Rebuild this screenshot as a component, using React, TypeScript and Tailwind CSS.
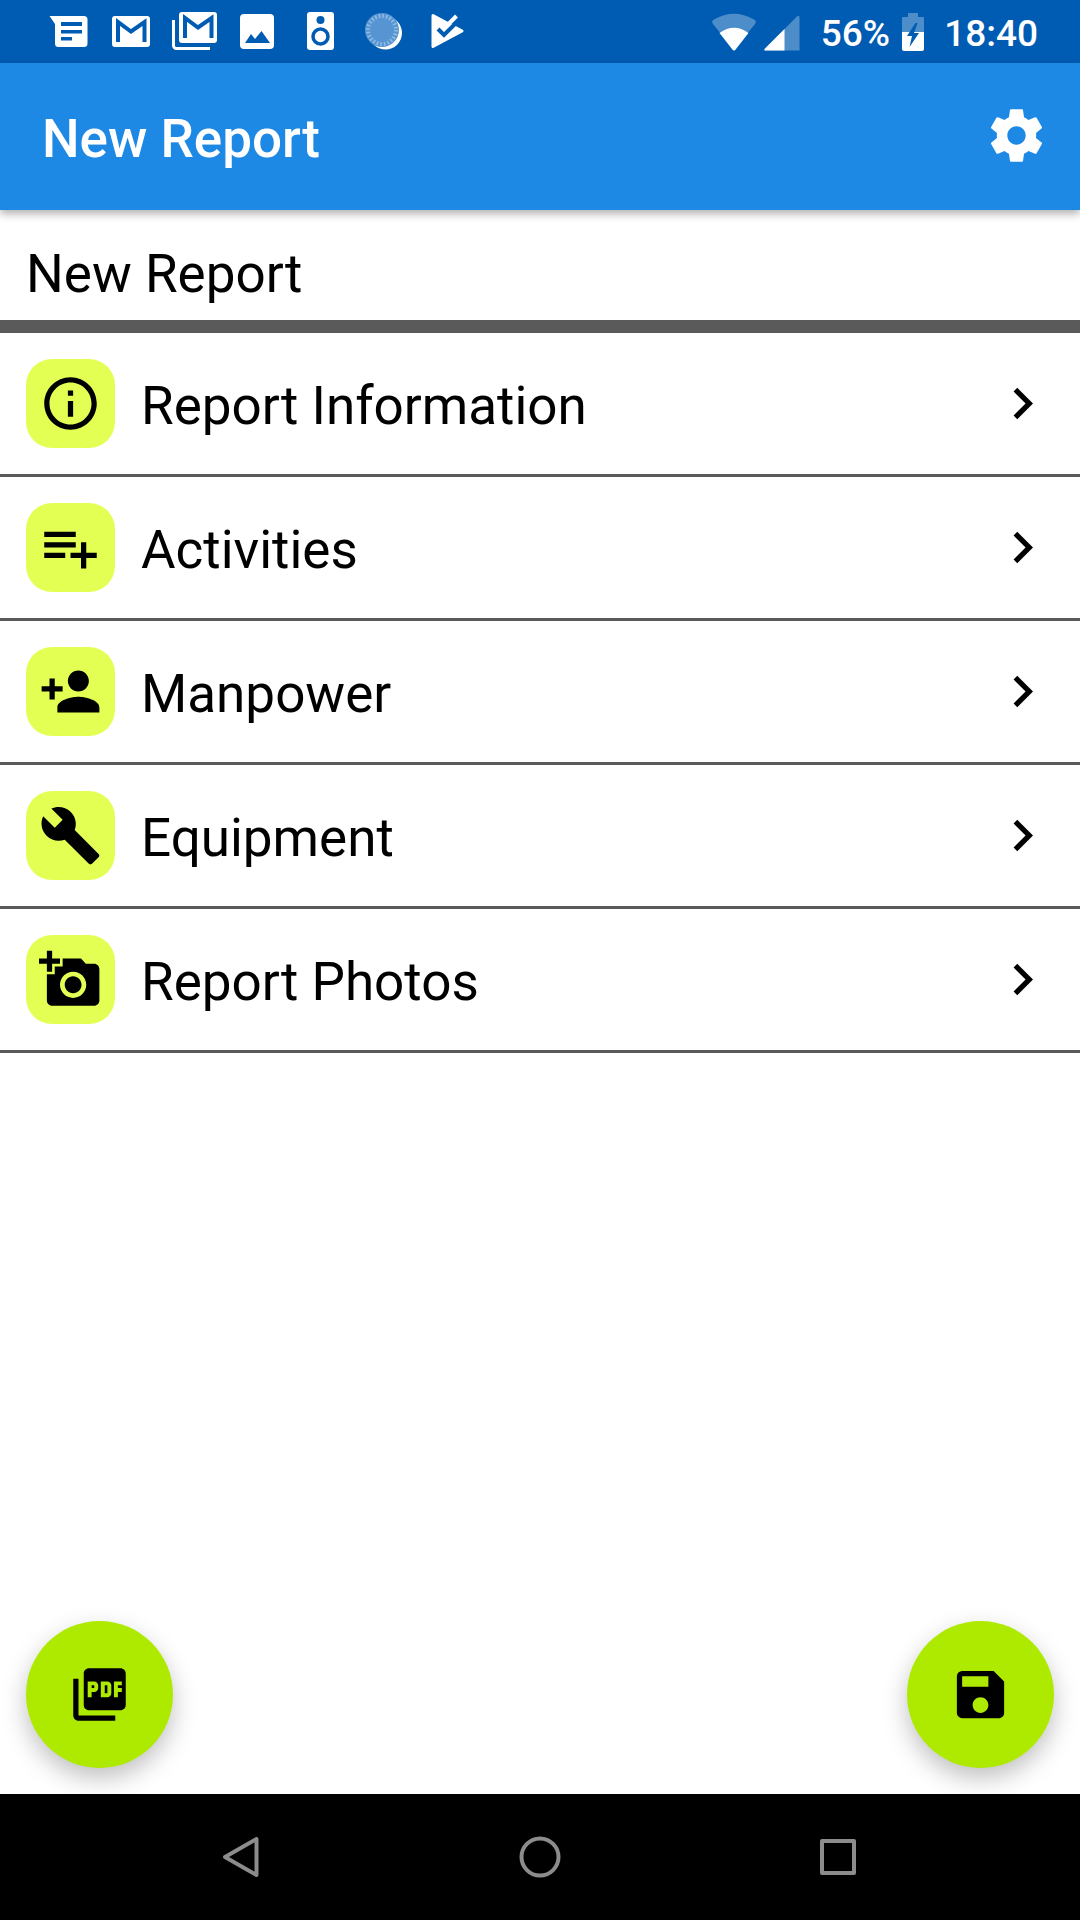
import React from 'react';
import {
  MdAddAPhoto,
  MdBuild,
  MdChevronRight,
  MdInfoOutline,
  MdPersonAdd,
  MdPictureAsPdf,
  MdSave,
} from 'react-icons/md';

const PlaylistAddIcon = ({ className }: { className?: string }) => (
  <svg className={className} viewBox="0 0 24 24" fill="currentColor">
    <path d="M14 10H2v2h12v-2zm0-4H2v2h12V6zm4 8v-4h-2v4h-4v2h4v4h2v-4h4v-2h-4zM2 16h8v-2H2v2z" />
  </svg>
);

const SettingsIcon = ({ className }: { className?: string }) => (
  <svg className={className} viewBox="0 0 24 24" fill="currentColor">
    <path d="M19.430 12.980c.040-.320.070-.640.070-.980s-.030-.660-.070-.980l2.110-1.650c.190-.150.240-.420.120-.640l-2-3.460c-.120-.220-.390-.300-.610-.220l-2.490 1c-.520-.400-1.080-.730-1.690-.980l-.380-2.650C14.460 2.180 14.250 2 14 2h-4c-.250 0-.460.180-.490.420l-.380 2.650c-.610.250-1.170.590-1.690.980l-2.490-1c-.230-.090-.490 0-.610.220l-2 3.460c-.130.220-.070.490.120.640l2.110 1.650c-.040.320-.070.650-.070.980s.030.660.070.980l-2.110 1.650c-.190.150-.240.420-.120.640l2 3.460c.120.220.390.300.610.220l2.490-1c.520.400 1.080.730 1.690.980l.380 2.650c.030.240.240.420.490.420h4c.250 0 .460-.180.490-.420l.380-2.650c.610-.250 1.170-.590 1.690-.980l2.490 1c.230.090.490 0 .610-.220l2-3.460c.120-.220.070-.490-.120-.640l-2.110-1.650zM12 15.500c-1.930 0-3.500-1.570-3.500-3.500s1.570-3.500 3.500-3.500 3.500 1.570 3.500 3.500-1.570 3.500-3.500 3.500z" />
  </svg>
);

const sections = [
  { title: 'Report Information', icon: MdInfoOutline },
  { title: 'Activities', icon: PlaylistAddIcon },
  { title: 'Manpower', icon: MdPersonAdd },
  { title: 'Equipment', icon: MdBuild },
  { title: 'Report Photos', icon: MdAddAPhoto },
];

const NotificationIcons = () => (
  <div className="flex items-center gap-[18px]">
    {/* Messages */}
    <svg className="size-[45px]" viewBox="0 0 45 45" fill="#fff">
      <path d="M3.500 7H38a3.500 3.500 0 0 1 3.500 3.500V34.500A3.500 3.500 0 0 1 38 38H12.500A3.500 3.500 0 0 1 9 34.500V15z" />
      <path d="M15 13h21v4H15zM15 21h21v3.500H15zM15 28h11v3.500H15z" fill="#005cb2" />
    </svg>
    {/* Mail */}
    <svg className="size-[45px]" viewBox="0 0 45 45" fill="none">
      <rect x="3" y="7" width="38" height="31" rx="3" fill="#fff" />
      <path d="M9 33V13l13 9.500L35.500 13v20" stroke="#005cb2" strokeWidth="4" />
    </svg>
    {/* Stacked mail */}
    <svg className="size-[45px]" viewBox="0 0 45 45" fill="none">
      <rect x="7" y="3" width="38" height="31" rx="3" fill="#fff" />
      <path d="M13 29V9l13 9.500L39.500 9v20" stroke="#005cb2" strokeWidth="4" />
      <path d="M1.500 11v25.500a3 3 0 0 0 3 3H38" stroke="#fff" strokeWidth="3" />
    </svg>
    {/* Picture */}
    <svg className="size-[45px]" viewBox="0 0 45 45">
      <rect x="5" y="5" width="34" height="35" rx="4" fill="#fff" />
      <path d="M10 34l6-9 4 5 6.500-8L35 34z" fill="#005cb2" />
    </svg>
    {/* Speaker */}
    <svg className="size-[45px]" viewBox="0 0 45 45">
      <rect x="9" y="3" width="27" height="38" rx="3" fill="#fff" />
      <circle cx="22.500" cy="11" r="4" fill="#005cb2" />
      <circle cx="22.500" cy="27.500" r="7.500" fill="none" stroke="#005cb2" strokeWidth="3.500" />
    </svg>
    {/* Dial */}
    <svg className="size-[45px]" viewBox="0 0 45 45">
      <circle cx="24.500" cy="24" r="16.500" fill="#fff" />
      <circle cx="21" cy="21" r="17" fill="#5795d2" />
      <circle cx="21" cy="21" r="14" fill="none" stroke="#8fbae5" strokeWidth="4" strokeDasharray="1.600 2.060" />
    </svg>
    {/* Play check */}
    <svg className="size-[45px]" viewBox="0 0 45 45" fill="none">
      <path d="M9 6.500L38 22 9 37.500z" fill="#fff" stroke="#fff" strokeWidth="3" strokeLinejoin="round" />
      <path d="M14 20l6 6 20-20" stroke="#005cb2" strokeWidth="4" />
      <path d="M19 20.500L32.500 7" stroke="#fff" strokeWidth="4" />
    </svg>
  </div>
);

const StatusBar = () => (
  <div className="flex h-[63px] items-center justify-between bg-[#005cb2] pl-[46px] pr-[42px] text-white">
    <NotificationIcons />
    <div className="flex items-center text-[37px] leading-none font-medium">
      <svg className="h-[38px] w-[44px]" viewBox="0 0 44 38">
        <path d="M22 37L1 11Q-1 8 2 6.500Q22-5 42 6.500Q45 8 43 11z" fill="#4d8dc9" />
        <path d="M22 37.500q-1 0-2-1.500L7.500 20Q22 9.500 36.500 20L24 36q-1 1.500-2 1.500z" fill="#fff" />
      </svg>
      <svg className="ml-2 h-[38px] w-[36px]" viewBox="0 0 36 38">
        <path d="M1 37.500Q-.5 37 1 35.500L33 3.500q2.500-2 2.500 1v33z" fill="#4d8dc9" />
        <path d="M1 37.500Q-.5 37 1 35.500L20.500 16v21.500z" fill="#fff" />
      </svg>
      <span className="ml-[21px] pt-1">56%</span>
      <svg className="ml-3 h-[38px] w-[22px]" viewBox="0 0 22 38">
        <path d="M1 4h5V0h10v4h5q1 0 1 1v14H0V5q0-1 1-1z" fill="#4d8dc9" />
        <path d="M0 19h22v17q0 2-2 2H2q-2 0-2-2z" fill="#fff" />
        <path d="M13.500 10L5 23h5L7.500 34 17 20h-5l3.500-10z" fill="#005cb2" />
      </svg>
      <span className="ml-5 pt-1">18:40</span>
    </div>
  </div>
);

const App = () => {
  return (
    <div className="flex min-h-screen flex-col bg-white font-['Roboto',sans-serif] text-black">
      <StatusBar />

      {/* App bar */}
      <header className="flex h-[147px] items-center justify-between bg-[#1e88e5] pr-8 pl-[42px] text-white shadow-[0_4px_8px_rgba(0,0,0,0.3)]">
        <h1 className="pt-1 text-[53px] leading-[62px] font-medium">New Report</h1>
        <button type="button" aria-label="Settings" className="pb-0.5">
          <SettingsIcon className="size-[63px]" />
        </button>
      </header>

      <h2 className="border-b-[13px] border-[#5a5a5a] px-[26px] pt-[33px] pb-[15px] text-[53px] leading-[62px]">
        New Report
      </h2>

      {/* Report sections */}
      <ul>
        {sections.map(({ title, icon: Icon }) => (
          <li key={title} className="border-b-3 border-[#5a5a5a]">
            <button type="button" className="flex w-full items-center gap-[26px] p-[26px] text-left">
              <span className="flex size-[89px] items-center justify-center rounded-[26px] bg-[#e4ff54]">
                <Icon className="size-[63px]" />
              </span>
              <span className="flex-1 pt-1 text-[53px] leading-[62px]">{title}</span>
              <MdChevronRight className="size-[63px]" />
            </button>
          </li>
        ))}
      </ul>

      {/* Floating actions */}
      <div className="flex flex-1 items-end justify-between p-[26px]">
        <button
          type="button"
          aria-label="Export PDF"
          className="flex size-[147px] items-center justify-center rounded-full bg-[#aeea00] shadow-[0_10px_24px_rgba(0,0,0,0.25)]"
        >
          <MdPictureAsPdf className="size-[63px]" />
        </button>
        <button
          type="button"
          aria-label="Save report"
          className="flex size-[147px] items-center justify-center rounded-full bg-[#aeea00] shadow-[0_10px_24px_rgba(0,0,0,0.25)]"
        >
          <MdSave className="size-[63px]" />
        </button>
      </div>

      {/* System navigation */}
      <nav className="flex h-[126px] items-center justify-center gap-64 bg-black">
        <button type="button" aria-label="Back">
          <svg className="size-[42px]" viewBox="0 0 42 42" fill="none" stroke="#8c8c8c" strokeWidth="4" strokeLinejoin="round">
            <path d="M35.500 3v36L4 21z" />
          </svg>
        </button>
        <button type="button" aria-label="Home">
          <svg className="size-[42px]" viewBox="0 0 42 42" fill="none" stroke="#8c8c8c" strokeWidth="4">
            <circle cx="21" cy="21" r="18.500" />
          </svg>
        </button>
        <button type="button" aria-label="Recent apps">
          <svg className="size-[42px]" viewBox="0 0 42 42" fill="none" stroke="#8c8c8c" strokeWidth="4" strokeLinejoin="round">
            <path d="M5 5h32v32H5z" />
          </svg>
        </button>
      </nav>
    </div>
  );
};

export default App;
